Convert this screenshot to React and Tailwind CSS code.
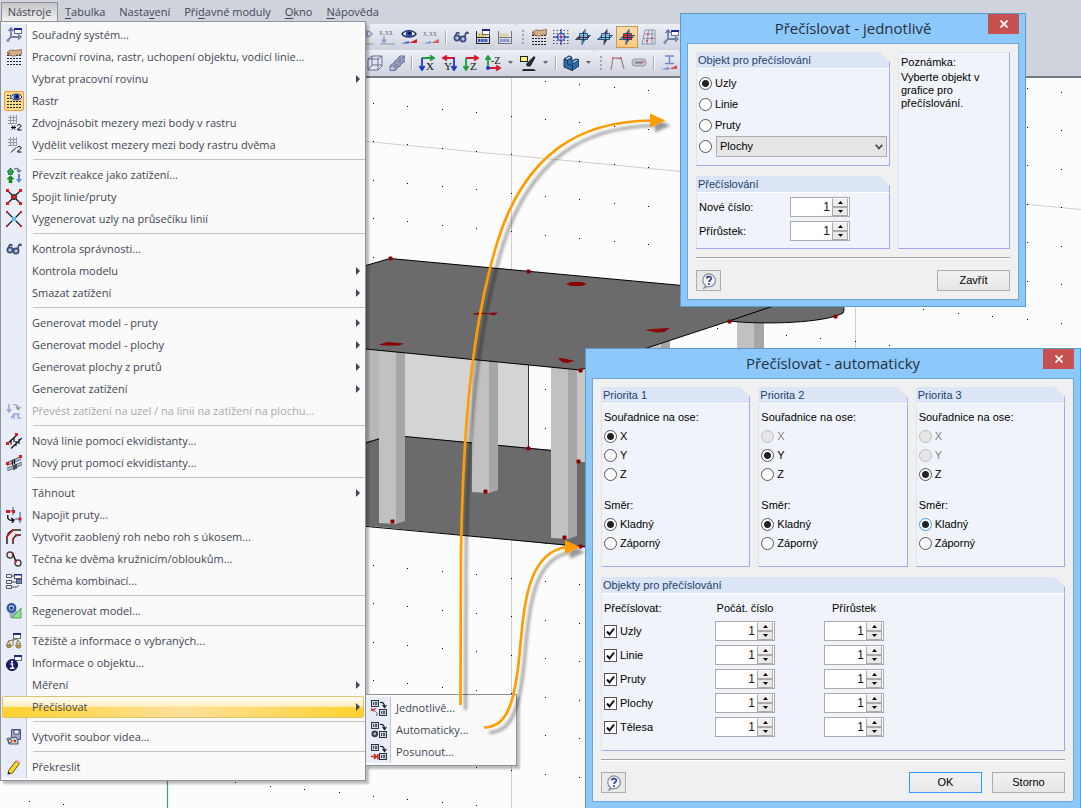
import React, { useState } from "react";

// small pieces that several icons share
const MiniWindow = ({ x = 8, y = 1 }) => (
  <g>
    <rect x={x + 0.5} y={y + 0.5} width="7" height="5" fill="#fff" stroke="#6b6f7a" />
    <rect x={x} y={y} width="8" height="2" fill="#1d2a8c" />
  </g>
);

const Dots = ({ y = 6, fill = "#222" }) => (
  <path
    d={`M1 ${y + 0.5}h14M1 ${y + 3.5}h14M1 ${y + 6.5}h14M1 ${y + 9.5}h14`}
    stroke={fill}
    strokeWidth="1"
    strokeDasharray="2 1"
    fill="none"
  />
);

const Hand = () => (
  <path
    d="M1 3.5C3 1 6 .5 9 1.500L15.500.5v5L11 6C9 7.500 6 7.500 4 6L1 5l3-.8z"
    fill="#d8ae86"
    stroke="#7a5a42"
    strokeWidth=".7"
  />
);

const NumBoxes = () => (
  <g fill="#cfe6f8" stroke="#1c2026" strokeWidth=".9">
    <rect x=".5" y=".5" width="7" height="6" />
    <path d="M2.500 2v3M4.200 2.200h1.500v2.500H4.200z" strokeWidth=".8" fill="none" />
    <rect x="8.500" y="9.500" width="7" height="6" />
    <path d="M10.500 11v3M12.200 11.200h1.500v2.500h-1.500z" strokeWidth=".8" fill="none" />
    <path d="M9 2.500c3-.5 4.500 1 4.500 4.500M11.500 5l2 2.500 2-2.500" strokeWidth="1.200" fill="none" />
  </g>
);

const Eye = () => (
  <g>
    <path d="M1 5C4 .5 12 .5 15 5 12 9 4 9 1 5z" fill="#e6ecfa" stroke="#222c44" strokeWidth="1.400" />
    <circle cx="8" cy="4.800" r="3.200" fill="#2448b8" />
    <circle cx="8.500" cy="4.300" r="1.200" fill="#000" />
  </g>
);

const Wedge = () => (
  <g>
    <path d="M0 14.500l8-2.500v2.500z" fill="#4a62d8" />
    <path d="M8 14l8-4v4z" fill="#d8201c" />
  </g>
);

// three crossing planes, one of them in red
const Planes = ({ flat = "#8ec9ee", side = "#8ec9ee", front = "#8ec9ee" }) => (
  <g stroke="#1f4c78" strokeWidth=".9">
    <path d="M7 5l3-4.500v10L7 15.500z" fill={side} />
    <path d="M.5 10.500L5 6.500h10.500L11 10.500z" fill={flat} />
    <path d="M4.500 4.500h8v6h-8z" fill={front} fillOpacity=".75" />
    <path d="M8.500 3v9M3 8.500h11" stroke="#16344f" fill="none" />
  </g>
);

const Goggles = () => (
  <g fill="none" stroke="#3c4a78" strokeWidth="1.700">
    <circle cx="4" cy="9" r="2.600" fill="#b9c6e6" />
    <circle cx="10" cy="10" r="2.600" fill="#b9c6e6" />
    <path d="M6.500 8.500l2-.5M3 6c0-3 3-3 3-1M12 8c0-5 3-6 3-3" />
  </g>
);

const Axes = ({ letter, flip, h = "#18a040", v = "#2038c8" }) => (
  <g>
    <path d={flip ? "M14 3H3M6 .5L2 3l4 2.500" : "M3 3h11M11 .5L15 3l-4 2.500"} stroke={h} strokeWidth="1.800" fill="none" />
    <path d={flip ? "M13 3v10M10.500 11l2.500 4 2.500-4" : "M3 3v10M.5 11L3 15l2.500-4"} stroke={v} strokeWidth="1.800" fill="none" />
    <text x={flip ? 3 : 7} y="15" fontSize="11" fontFamily="Liberation Serif, serif" fill="#111">
      {letter}
    </text>
  </g>
);

const Hash = () => (
  <path d="M3.500 1v9M6.500 1v9M9.500 1v9M1 3.500h9M1 6.500h9M1 9.500h9" transform="translate(1 -1)" stroke="#9b9b9b" fill="none" />
);

const Abacus = () => (
  <g>
    <path d="M1.500 2v13M14.500 2v13M1 8.500h14M1 14.500h14" stroke="#222" fill="none" />
    <path d="M3 6h8" stroke="#d8b838" strokeWidth="3" strokeDasharray="2.500 .7" />
    <path d="M3 11.500h10" stroke="#3450b8" strokeWidth="3" strokeDasharray="2.500 .7" />
  </g>
);

const icons = {
  coord: (
    <g>
      <path d="M5 2v8h8M5 10l-4 4" stroke="#7081ac" strokeWidth="1.800" fill="none" />
      <path d="M2.500 4L5 1l2.500 3M12 7.500l3 2.500-3 2.500" stroke="#5a6a94" strokeWidth="1.200" fill="none" />
      <circle cx="2" cy="13.500" r="1.500" fill="#7f90bc" />
      <MiniWindow x={8} y={1} />
    </g>
  ),
  handGrid: (
    <g>
      <Dots y={6} />
      <Hand />
    </g>
  ),
  eyeGrid: (
    <g>
      <path d="M1 2.500h4M1 5.500h4M1 8.500h14M1 11.500h14M1 14.500h14" stroke="#222" strokeDasharray="2 1" />
      <path d="M4.500 4C7 0 14 0 16 4c-2 4-9 4-11.500 0z" fill="#dfe7fa" stroke="#20304c" />
      <circle cx="10.500" cy="4" r="3" fill="#2448b8" />
      <circle cx="11" cy="3.500" r="1.200" fill="#000" />
    </g>
  ),
  mul2: (
    <g>
      <Hash />
      <path d="M5 12.500h5M6 10.500l3 4M9 10.500l-3 4" stroke="#000" fill="none" />
      <path d="M11.500 11c0-2 3.500-2 3.500 0 0 1.500-3.500 2.500-3.500 4H15.500" stroke="#000" fill="none" />
    </g>
  ),
  div2: (
    <g>
      <Hash />
      <path d="M5 15.500l5-5" stroke="#000" fill="none" />
      <path d="M11.500 11c0-2 3.500-2 3.500 0 0 1.500-3.500 2.500-3.500 4H15.500" stroke="#000" fill="none" />
    </g>
  ),
  reaction: (
    <g>
      <path d="M4.500 1L8 5H6.500v2.500h-4V5H1z" fill="#2fa84a" stroke="#165a28" strokeWidth=".7" />
      <path d="M4.500 8.500L8 12H6v4H3v-4H1z" fill="#119c14" stroke="#0b5a10" strokeWidth=".5" />
      <path d="M8 2.500c3-2 5-1 5 2M11 3l2 2 2-2" stroke="#6a7694" fill="none" strokeWidth="1.300" />
      <path d="M12 7h2v5h2l-3 4-3-4h2z" fill="#5a86e0" />
    </g>
  ),
  join: (
    <g>
      <path d="M2 2l12 12M14 2L2 14" stroke="#111" strokeWidth="1.200" />
      <circle cx="8" cy="8" r="2.500" fill="#e02828" stroke="#222" />
      <path d="M0 0h3v3H0zM13 0h3v3h-3zM0 13h3v3H0zM13 13h3v3h-3z" fill="#e01818" />
    </g>
  ),
  intersect: (
    <g>
      <path d="M1 1l14 14M15 1L1 15" stroke="#111" strokeWidth="1.100" />
      <rect x="6" y="6" width="4" height="4" fill="#58b8f4" />
      <path d="M0 0h2v2H0zM14 0h2v2h-2zM0 14h2v2H0zM14 14h2v2h-2z" fill="#e01818" />
    </g>
  ),
  goggles: <Goggles />,
  convert: (
    <g fill="none" stroke="#9aa6da" strokeWidth="1.500">
      <path d="M3 1v7M1 6l2 3 2-3M5 15l3-4h6M8 11v5M12 11v4l3 0" />
      <path d="M7 2c4-1 5 1 5 4M10 4l2 2.500L14.500 4" stroke="#8d9096" strokeWidth="1.200" />
    </g>
  ),
  offsetLine: (
    <g stroke="#111" fill="none" strokeWidth="1.200">
      <path d="M1 11L11 2M5 15.500L16 5M5 6.500v5M8 4v5M10 8v5M13 6v5" />
      <path d="M0 9h3v3H0zM9 0h3v3H9z" fill="#e01818" stroke="none" />
    </g>
  ),
  offsetBar: (
    <g stroke="#111" fill="none" strokeWidth=".8">
      <path d="M1 9l14-6M1 14.500l15-6" stroke="#9fb8d8" strokeWidth="2.500" />
      <path d="M1 7.500l14-6M1 10.500l14-6M1 13l15-6M1 16l15-6" stroke="#555" />
      <path d="M6.500 5v5M8.500 4v5M8 10v5M10 9v5" strokeWidth="1.200" />
      <path d="M0 7h3v3H0zM13 0h3v3h-3z" fill="#e01818" stroke="none" />
    </g>
  ),
  connect: (
    <g>
      <path d="M0 4h8M7 0v8M14 5v11M9 12h6" stroke="#7fa4d4" strokeWidth="2" />
      <path d="M0 3h4v3H0zM6 3h3v3H6zM12.500 10.500h3v3h-3z" fill="#d81818" />
      <path d="M2 8c-1 4 1 6 5 5M5 11l3 2-2 3" stroke="#111" fill="none" strokeWidth="1.400" />
    </g>
  ),
  fillet: (
    <g fill="none" stroke="#222" strokeWidth="1.500">
      <path d="M1 15V10C1 5 4 2 8 1h7M7 15v-5l3-4h5" />
      <path d="M6 0h2v2H6zM0 7h2v2H0zM9 5h2.500v2.500H9zM6 10h2v2H6z" fill="#e01818" stroke="none" />
      <path d="M1.500 7L7 1.500" stroke="#e01818" strokeWidth="1.200" />
    </g>
  ),
  tangent: (
    <g fill="none" stroke="#4a4040" strokeWidth="1.400">
      <circle cx="4" cy="4" r="3" />
      <circle cx="12" cy="12" r="3" />
      <path d="M7 3l3 8" stroke="#111" />
      <path d="M5.500 1.500h2v2h-2zM9 9.500h2v2H9z" fill="#e01818" stroke="none" />
    </g>
  ),
  scheme: (
    <g fill="#e9eef8" stroke="#555">
      <path d="M.5 1.500h5v3h-5zM.5 7.500h5v3h-5zM.5 12.500h5v3h-5z" />
      <path d="M6 3h4M6 14h5l2-2M6 9h4" fill="none" />
      <rect x="8.500" y="1.500" width="7" height="4" fill="#fff" />
      <rect x="10.500" y="6.500" width="5" height="4" fill="#5a86d8" />
      <path d="M8 1h8v1.500H8z" fill="#1d2a8c" stroke="none" />
    </g>
  ),
  regen: (
    <g>
      <path d="M2 5l4-2 9 9v3H4z" fill="#9fb0c8" />
      <path d="M6 15L15 5v10z" fill="#8fe08f" stroke="#3f9a4a" strokeWidth=".8" />
      <circle cx="5.500" cy="5" r="3.800" fill="none" stroke="#2a52a8" strokeWidth="2.200" />
      <circle cx="5.500" cy="5" r="1.400" fill="#17306a" />
    </g>
  ),
  scales: (
    <g>
      <path d="M7 6v7M2 8l10-2M2.500 8L.5 12h4zM12 7l-2 4h5z" stroke="#7a6a3a" fill="#efe6bd" strokeWidth=".9" />
      <path d="M.5 12.500h5l-1 2h-3zM9.500 12.500h5.500l-1 2.500h-3z" fill="#c9ab48" stroke="#6f5a1c" strokeWidth=".7" />
      <MiniWindow x={7} y={0} />
    </g>
  ),
  info: (
    <g>
      <MiniWindow x={8} y={0} />
      <circle cx="6" cy="10" r="5.500" fill="#181c74" stroke="#0c0e40" />
      <path d="M4.500 9h2v4M4 13.200h4.500" stroke="#fff" fill="none" strokeWidth="1.400" />
      <rect x="5" y="5.800" width="2" height="1.800" fill="#fff" />
    </g>
  ),
  video: (
    <g stroke="#3f4660" strokeWidth=".9">
      <path d="M5.500.5h9v10h-9z" fill="#9fa6d8" />
      <path d="M8 1h5v4H8z" fill="#f4f5ff" />
      <path d="M1 9.500l9-1.500 2 3v4H3z" fill="#c9ccd4" />
      <circle cx="4" cy="12" r="1.600" fill="#eee" />
      <path d="M6 11h2v2H6z" fill="#e0c020" stroke="none" />
      <path d="M8 11h2v2H8z" fill="#d02020" stroke="none" />
    </g>
  ),
  pencil: (
    <g>
      <path d="M2.500 11.500L10 2l3.500 2.500-7 9.500-4 1z" fill="#f7d425" stroke="#5a4a14" strokeWidth=".9" />
      <path d="M10 2l1.500-1.500 3 2L13.500 4.500z" fill="#f3b6c6" />
      <path d="M2 12.500l-.5 3 3-1z" fill="#222" />
    </g>
  ),
  renumPick: (
    <g>
      <NumBoxes />
      <path d="M0 8l2.500 3.500M0 10.500L5 8.500" stroke="#c82828" strokeWidth="1.200" fill="none" />
      <path d="M3 10l4 4-2 .5 1 1.500" stroke="#777" fill="#eee" />
    </g>
  ),
  renumAuto: (
    <g>
      <NumBoxes />
      <circle cx="3.800" cy="11.800" r="2.400" fill="#b9bcc8" stroke="#3a3f50" strokeWidth="2" />
    </g>
  ),
  renumShift: (
    <g>
      <NumBoxes />
      <path d="M0 12.500h5M3 10l2.500 2.500L3 15M7 10v5.500" stroke="#d81818" strokeWidth="1.500" fill="none" />
    </g>
  ),
  xxxDown: (
    <g opacity=".7">
      <text x="0" y="6" fontSize="8" fontFamily="Liberation Serif, serif" fill="#333">x.xx</text>
      <path d="M5 7v6M3 10.500L5 13.500l2-3" stroke="#5a86d8" strokeWidth="1.500" fill="none" />
      <path d="M1 15h15" stroke="#777" />
    </g>
  ),
  xxxWedge: (
    <g opacity=".65">
      <text x="0" y="7" fontSize="8" fontFamily="Liberation Serif, serif" fill="#333">x.xx</text>
      <Wedge />
    </g>
  ),
  eyeWedge: (
    <g>
      <Eye />
      <Wedge />
    </g>
  ),
  abacusWin: (
    <g>
      <Abacus />
      <MiniWindow x={7} y={0} />
    </g>
  ),
  abacus: (
    <g opacity=".55">
      <Abacus />
    </g>
  ),
  snap: (
    <g>
      <path d="M0 1.500h16M0 4.500h16M0 8.500h16M0 11.500h16M0 14.500h16" stroke="#555" strokeDasharray="1.500 2" />
      <path d="M8 0v16M0 8h16" stroke="#20309c" />
      <circle cx="8" cy="8" r="3.500" fill="#eef1f8" stroke="#2a48c8" strokeWidth="1.200" />
      <path d="M8 3v10M3 8h10" stroke="#2a48c8" />
      <rect x="7" y="7" width="2" height="2" fill="#e02020" />
    </g>
  ),
  planeXY: <Planes flat="#e02828" />,
  planeYZ: <Planes side="#e02828" />,
  planeXZ: <Planes front="#e80c0c" />,
  planeGrid: (
    <g stroke="#7a8ca8" fill="none" opacity=".85">
      <path d="M4 1h10v14H1zM3.500 5h10M2.500 9.500h11.500M7.500 1L6 15M11 1v14" />
      <path d="M6 4h2v2H6zM10 8h2v2h-2zM5 11h2v2H5z" fill="#d84848" stroke="none" />
    </g>
  ),
  fadedEye: (
    <g opacity=".4">
      <Eye />
      <path d="M0 15h16" stroke="#333" />
    </g>
  ),
  cube: (
    <g fill="#dfe5f3" stroke="#66708c">
      <path d="M1 4l4-3h10v10l-4 4H1z" />
      <path d="M1 4h10v11M11 4l4-3M5 1v9h10M5 10l-4 5" fill="none" />
    </g>
  ),
  cubes: (
    <g fill="#b9c4e0" stroke="#66708c">
      <path d="M9 3l2-2h5v5l-2 2H9z" />
      <path d="M5 7l2-2h5v5l-2 2H5z" />
      <path d="M1 11l2-2h5v5l-2 1.500H1z" />
      <path d="M9 3h5v5M5 7h5v5M1 11h5v4M14 3l2-2M10 7l2-2M6 11l2-2" fill="none" />
    </g>
  ),
  axisX: <Axes letter="X" h="#18a040" />,
  axisY: <Axes letter="Y" flip h="#d81830" />,
  axisZ: <Axes letter="Z" h="#d81830" v="#18a040" />,
  axisMinusZ: (
    <g>
      <path d="M3 13V2M.5 5L3 1l2.500 4" stroke="#18a040" strokeWidth="1.800" fill="none" />
      <path d="M3 13h11M11 10.500l4 2.500-4 2.500" stroke="#d81830" strokeWidth="1.800" fill="none" />
      <circle cx="3" cy="13" r="2" fill="#2038c8" />
      <text x="6" y="9" fontSize="10" fontFamily="Liberation Serif, serif" fill="#111">-Z</text>
    </g>
  ),
  render: (
    <g>
      <path d="M3 14h11l2 2H2zM6 9l8-8 1.500 1.500-5 9H7z" fill="#222a30" />
      <rect x=".5" y="1.500" width="7" height="5" fill="#fdf66a" stroke="#222" />
    </g>
  ),
  solid: (
    <g stroke="#12304c" strokeWidth=".9">
      <path d="M1 4l5-3 3 1.500V6l4-2 3 1v6l-7 4.500L1 12z" fill="#2f6ea6" />
      <path d="M1 4l5-3 3 1.500L4.500 5zM9 7l4-3 3 1-6.500 4z" fill="#a9d3f0" />
      <path d="M4.500 5v4l5 1.500v5" fill="none" />
    </g>
  ),
  frame: (
    <g fill="none" stroke="#8a6a72" strokeWidth="1.200" opacity=".8">
      <path d="M2 15L4 3h8l3 11M4 3l8 1" />
      <path d="M3 2h2v2H3zM11 2h2v2h-2z" fill="#d84848" stroke="none" />
    </g>
  ),
  tape: (
    <g opacity=".7">
      <rect x="1" y="4" width="14" height="7" rx="3" fill="#b8bcc8" stroke="#777" />
      <path d="M4 7.500h7" stroke="#555" strokeWidth="2" />
      <path d="M11 6h2v2h-2z" fill="#d84848" />
    </g>
  ),
  beam: (
    <g opacity=".7">
      <path d="M4 1h9M8.500 1v7M4 8.500h9" stroke="#4a62b8" strokeWidth="1.500" />
      <Wedge />
    </g>
  ),
};

const Icon = ({ name }) => (
  <svg viewBox="0 0 16 16" className="size-4 shrink-0" aria-hidden="true">
    {icons[name]}
  </svg>
);

const menuItems = [
  { label: "Souřadný systém...", icon: "coord" },
  { label: "Pracovní rovina, rastr, uchopení objektu, vodicí linie...", icon: "handGrid" },
  { label: "Vybrat pracovní rovinu", sub: true },
  { label: "Rastr", icon: "eyeGrid", active: true },
  { label: "Zdvojnásobit mezery mezi body v rastru", icon: "mul2" },
  { label: "Vydělit velikost mezery mezi body rastru dvěma", icon: "div2" },
  null,
  { label: "Převzít reakce jako zatížení...", icon: "reaction" },
  { label: "Spojit linie/pruty", icon: "join" },
  { label: "Vygenerovat uzly na průsečíku linií", icon: "intersect" },
  null,
  { label: "Kontrola správnosti...", icon: "goggles" },
  { label: "Kontrola modelu", sub: true },
  { label: "Smazat zatížení", sub: true },
  null,
  { label: "Generovat model - pruty", sub: true },
  { label: "Generovat model - plochy", sub: true },
  { label: "Generovat plochy z prutů", sub: true },
  { label: "Generovat zatížení", sub: true },
  { label: "Převést zatížení na uzel / na linii na zatížení na plochu...", icon: "convert", disabled: true },
  null,
  { label: "Nová linie pomocí ekvidistanty...", icon: "offsetLine" },
  { label: "Nový prut pomocí ekvidistanty...", icon: "offsetBar" },
  null,
  { label: "Táhnout", sub: true },
  { label: "Napojit pruty...", icon: "connect" },
  { label: "Vytvořit zaoblený roh nebo roh s úkosem...", icon: "fillet" },
  { label: "Tečna ke dvěma kružnicím/obloukům...", icon: "tangent" },
  { label: "Schéma kombinací...", icon: "scheme" },
  null,
  { label: "Regenerovat model...", icon: "regen" },
  null,
  { label: "Těžiště a informace o vybraných...", icon: "scales" },
  { label: "Informace o objektu...", icon: "info" },
  { label: "Měření", sub: true },
  { label: "Přečíslovat", sub: true, highlight: true },
  null,
  { label: "Vytvořit soubor videa...", icon: "video" },
  null,
  { label: "Překreslit", icon: "pencil" },
];

const subItems = [
  { label: "Jednotlivě...", icon: "renumPick" },
  { label: "Automaticky...", icon: "renumAuto" },
  { label: "Posunout...", icon: "renumShift" },
];

// [before, underlined letter, after]
const menuBar = [
  ["", "T", "abulka"],
  ["Nasta", "v", "ení"],
  ["Pří", "d", "avné moduly"],
  ["", "O", "kno"],
  ["", "N", "ápověda"],
];

function MenuBar() {
  return (
    <nav className="flex h-[22px] items-end pl-px">
      <button className="h-[20px] w-[57px] border border-b-0 border-[#8d9096] bg-linear-to-b from-[#c6c6c6] to-[#f4f4f4] text-center">
        Nástro<u>j</u>e
      </button>
      <div className="flex h-[20px] items-center gap-3.5 pl-[7px]">
        {menuBar.map(([a, b, c]) => (
          <button key={a + b + c}>
            {a}
            <u className="underline-offset-2">{b}</u>
            {c}
          </button>
        ))}
      </div>
    </nav>
  );
}

function Tool({ name, active }) {
  return (
    <button
      aria-label={name}
      className={
        active
          ? "flex size-[22px] shrink-0 items-center justify-center border border-[#c29b5c] bg-linear-to-b from-[#fbdcae] to-[#fdc978]"
          : "flex size-[22px] shrink-0 items-center justify-center"
      }
    >
      <Icon name={name} />
    </button>
  );
}

const Split = () => <div className="mx-[3px] h-3.5 w-0.5 shrink-0 border-l border-[#a6abb8] bg-white" />;

const Drop = () => (
  <svg viewBox="0 0 5 3" className="mx-1 h-[3px] w-[5px] shrink-0" aria-hidden="true">
    <path d="M0 0h5L2.500 3z" fill="#666" />
  </svg>
);

const Grip = () => (
  <svg viewBox="0 0 2 14" className="ml-[5px] mr-1 h-3.5 w-0.5 shrink-0" aria-hidden="true">
    <path d="M0 0h2v2H0zM0 4h2v2H0zM0 8h2v2H0zM0 12h2v2H0z" fill="#a0a5b0" />
  </svg>
);

const band = "flex h-[25px] items-center rounded-r bg-linear-to-b from-[#eceff5] to-[#d0d4df]";

function Toolbars() {
  return (
    <div className="flex flex-col gap-px overflow-hidden pb-px pt-0.5">
      <div className="flex pr-[300px]">
        <div className={band + " pl-[354px] pr-px"}>
          <Tool name="fadedEye" />
          <Tool name="xxxDown" />
          <Tool name="eyeWedge" />
          <Tool name="xxxWedge" />
          <Split />
          <Tool name="goggles" />
          <Tool name="abacusWin" />
          <Tool name="abacus" />
        </div>
        <div className={band}>
          <Grip />
          <Tool name="handGrid" />
          <Tool name="snap" />
          <Tool name="planeXY" />
          <Tool name="planeYZ" />
          <Tool name="planeXZ" active />
          <Tool name="planeGrid" />
          <Tool name="coord" />
        </div>
      </div>
      <div className="flex pr-[300px]">
        <div className={band + " pl-[364px]"}>
          <Tool name="cube" />
          <Tool name="cubes" />
          <Split />
          <Tool name="axisX" />
          <Tool name="axisY" />
          <Tool name="axisZ" />
          <Tool name="axisMinusZ" />
          <Drop />
          <Tool name="render" />
          <Drop />
          <Split />
          <Tool name="solid" />
          <Drop />
        </div>
        <div className={band}>
          <Grip />
          <Tool name="frame" />
          <Tool name="tape" />
          <Split />
          <Tool name="beam" />
        </div>
      </div>
    </div>
  );
}

// grid points of the work plane, the rows run slightly downwards
const gridDots = [];
for (let col = -10; col <= 21; col++) {
  for (let row = -2; row <= 20; row++) {
    gridDots.push([Math.round(373 + col * 34.4), Math.round(102.5 + col * 3.31 + row * 38.5)]);
  }
}

const nodes = [
  [390, 258], [528, 271], [580, 370], [392, 521], [485, 491], [528, 448],
  [564, 537], [580, 546], [578, 461], [729, 321], [835, 316],
];

function Scene() {
  return (
    <svg viewBox="0 78 1081 730" preserveAspectRatio="xMinYMin slice" className="block min-h-0 w-full flex-1 bg-[#fcfcfc]">
      <path d="M511.500 78v730M855.500 78v730M340 139L1081 209.500" stroke="#cfcfcf" fill="none" />
      <path d="M167.500 600v208" stroke="#3f9a92" strokeWidth="1.200" />
      {gridDots.map(([x, y]) => (
        <rect key={x + "-" + y} x={x} y={y} width="1" height="1" fill="#000" />
      ))}
      <path d="M340 340h188v115H340z" fill="#d4d4d4" />
      <path d="M340 340h39v115h-39z" fill="#b8b8b8" />
      <path d="M529 360h24v90h-24z" fill="#fcfcfc" />
      <path d="M528.500 360v88" stroke="#333" />
      <path d="M545 389h1v1h-1zM545 428h1v1h-1z" />
      <path d="M340 449L380 438 405 436.500 640 458 700 540 620 551 340 523z" fill="#6b6b6b" />
      <path d="M366 443L380 438.500M405 436.500L552 450.500M340 524L620 550" stroke="#000" fill="none" />
      <g>
        <path d="M577 366h10v96h-10z" fill="#c6c6c6" />
        <path d="M379 348h17v176l-17-1z" fill="#c1c1c1" />
        <path d="M396 348h9v173l-9 3z" fill="#a6a6a6" />
        <path d="M472 355h17v138l-17-1z" fill="#c1c1c1" />
        <path d="M489 355h9v135l-9 3z" fill="#a6a6a6" />
        <path d="M551 362h17v177l-17-1z" fill="#c1c1c1" />
        <path d="M568 362h9v174l-9 3z" fill="#a6a6a6" />
        <path d="M645 335h16v20h-16z" fill="#c1c1c1" />
        <path d="M661 332h9v20h-9z" fill="#a6a6a6" />
        <path d="M737 318h17v50h-17z" fill="#c1c1c1" />
        <path d="M754 318h10v50h-10z" fill="#a6a6a6" />
      </g>
      <path d="M340 273L390 258.500 720 289 800 290C835 294 848 304 843 313 825 323 765 325 729 321L580 370 340 346.500z" fill="#6b6b6b" stroke="#000" />
      <path d="M729 321L800 297" stroke="#000" />
      <g fill="#8b0000">
        <path d="M566 284l5-2h10l6 2-5 2h-11z" />
        <path d="M472 314l7-1.500 8 .5 11-.5-4 3-6-2-10 1.500z" />
        <path d="M379 344.500l9-2.500 16 1.500-5 2h-16z" />
        <path d="M558 358l6 .5 11 2.500-8 2-5-1z" />
        <path d="M645 330l8-1 17-1-6 4-8 .5z" />
        {nodes.map(([x, y]) => (
          <rect key={x + "-" + y} x={x - 1.5} y={y - 1.5} width="4" height="4" rx="1" />
        ))}
      </g>
    </svg>
  );
}

function MenuRow({ item, gutter }) {
  return (
    <button
      disabled={item.disabled}
      className={
        item.highlight
          ? "flex h-[22px] items-center border border-[#e2c16b] rounded-xs bg-[linear-gradient(180deg,#fffef8,#fdedb8_50%,transparent_50%),linear-gradient(90deg,#ffd22e,#fde09a_50%,#ffd22e)] mx-px text-left"
          : "flex h-[22px] items-center text-left disabled:text-[#a9a9a9]"
      }
    >
      <span className={gutter + (item.highlight ? " -ml-0.5" : "") + " flex h-full shrink-0 items-center justify-center"}>
        {item.icon && (
          <span
            className={
              item.active
                ? "flex size-5 items-center justify-center rounded-xs border border-[#f29a36] bg-[#fddc8a]"
                : "flex size-5 items-center justify-center"
            }
          >
            <Icon name={item.icon} />
          </span>
        )}
      </span>
      <span className="flex-1 whitespace-nowrap pl-[5px]">{item.label}</span>
      {item.sub && (
        <svg viewBox="0 0 4 8" className={item.highlight ? "mr-[3px] h-2 w-1" : "mr-[5px] h-2 w-1"} aria-hidden="true">
          <path d="M0 0l4 4-4 4z" fill="#3c4654" />
        </svg>
      )}
    </button>
  );
}

function ToolsMenu() {
  return (
    <div className="absolute left-0 top-[21px] w-[366px] border border-[#8f9299] bg-[#fafafa] py-0.5 shadow-[3px_3px_2px_rgba(0,0,0,0.25)]">
      <div className="flex flex-col bg-[linear-gradient(90deg,#e9edf7_25px,#c6c6c6_25px,#c6c6c6_26px,#fafafa_26px)]">
        {menuItems.map((item, i) =>
          item ? (
            <MenuRow key={item.label} item={item} gutter="w-[26px]" />
          ) : (
            <div key={i} className="flex h-2 pl-8 pt-[3px]">
              <hr className="h-px flex-1 border-0 bg-[#c3c3c3]" />
            </div>
          )
        )}
      </div>
    </div>
  );
}

function SubMenu() {
  return (
    <div className="absolute left-[365px] top-[694px] w-[152px] border border-[#8f9299] bg-[#fafafa] py-0.5 shadow-[3px_3px_2px_rgba(0,0,0,0.25)]">
      <div className="flex flex-col bg-[linear-gradient(90deg,#e9edf7_24px,#c6c6c6_24px,#c6c6c6_25px,#fafafa_25px)]">
        {subItems.map((item) => (
          <MenuRow key={item.label} item={item} gutter="w-[25px]" />
        ))}
      </div>
    </div>
  );
}

function Dialog({ title, place, children }) {
  return (
    <section className={place + " absolute border border-[#5e9bcb] bg-[#8dc8fb] px-1.5 pb-1.5 font-['Liberation_Sans',Arial,sans-serif] text-[11px] text-black"}>
      <div className="flex h-[29px]">
        <h2 className="flex-1 pl-[31px] text-center font-['Open_Sans',sans-serif] text-[15px] leading-7 text-[#26303c]">
          {title}
        </h2>
        <button aria-label="Zavřít" className="flex h-5 w-[31px] items-center justify-center bg-[#c75050]">
          <svg viewBox="0 0 8 8" className="size-2" aria-hidden="true">
            <path d="M.5.5l7 7M7.500.5l-7 7" stroke="#fff" strokeWidth="1.700" />
          </svg>
        </button>
      </div>
      <div className="border border-[#6fa6d3] bg-[#f0f0f0] p-2">{children}</div>
    </section>
  );
}

function Group({ title, className = "", children }) {
  return (
    <div className={className}>
      <h3 className="h-4 border-r border-[#a6a6ee] bg-[#dbe5f5] pl-0.5 leading-4 text-[#1c3f6e] [clip-path:polygon(0_0,calc(100%-10px)_0,100%_10px,100%_100%,0_100%)]">
        {title}
      </h3>
      <div className="border border-t-white border-b-[#a6a6ee] border-l-[#dbe5f5] border-r-[#a6a6ee] bg-[#f0f4fa]">
        {children}
      </div>
    </div>
  );
}

function RadioInput({ ring = "border-[#555]", ...props }) {
  return (
    <input
      type="radio"
      className={
        ring +
        " size-[13px] shrink-0 appearance-none rounded-full border bg-white checked:bg-[radial-gradient(circle,#222_3px,#fff_4px)] disabled:border-[#bcbcbc] disabled:bg-[#e6e6e6]"
      }
      {...props}
    />
  );
}

function Radio({ label, height = "h-[19px]", ...rest }) {
  return (
    <label className={height + " flex items-center gap-[3px] has-disabled:text-[#838383]"}>
      <RadioInput {...rest} />
      {label}
    </label>
  );
}

function Spinner({ id, label }) {
  const [value, setValue] = useState(1);
  return (
    <span className="flex h-5 w-[60px] border border-[#ababab] bg-white pr-px">
      <input
        id={id}
        aria-label={label}
        value={value}
        onChange={(e) => setValue(Number(e.target.value) || 0)}
        className="w-0 min-w-0 flex-1 pr-0.5 text-right text-[12px] text-[#201020] outline-none"
      />
      <span className="flex w-4 flex-col">
        <button
          aria-label="+"
          onClick={() => setValue(value + 1)}
          className="flex flex-1 items-center justify-center border border-[#ababab] border-t-white bg-[#efefef]"
        >
          <svg viewBox="0 0 5 3" className="h-[3px] w-[5px]"><path d="M0 3L2.500 0 5 3z" /></svg>
        </button>
        <button
          aria-label="-"
          onClick={() => setValue(value - 1)}
          className="flex flex-1 items-center justify-center border border-[#ababab] bg-[#e9e9e9]"
        >
          <svg viewBox="0 0 5 3" className="h-[3px] w-[5px]"><path d="M0 0h5L2.500 3z" /></svg>
        </button>
      </span>
    </span>
  );
}

const Rule = () => <div className="mt-2 h-0.5 border-t border-[#a0a0a0] bg-white" />;

function HelpButton() {
  return (
    <button aria-label="?" className="mr-auto flex h-[21px] w-[25px] items-center justify-center border border-[#adadad] bg-[#e9e9e9]">
      <svg viewBox="0 0 16 16" className="size-4" aria-hidden="true">
        <path d="M3 15l1.500-2.500A6.300 6.300 0 1 1 8 13.600H6z" fill="#f6f7fb" stroke="#8a8f9c" strokeWidth="1.300" />
        <path d="M5.800 5.500C6 2.800 10.600 2.900 10.300 5.600 10 7.300 8 7.200 8 9" fill="none" stroke="#3a4a94" strokeWidth="1.800" />
        <circle cx="7.900" cy="11" r="1.100" fill="#3a4a94" />
      </svg>
    </button>
  );
}

function PushButton({ children, primary }) {
  return (
    <button
      className={
        primary
          ? "h-[21px] w-[73px] border border-[#3399ff] bg-linear-to-b from-[#f2f2f2] to-[#e8e8e8]"
          : "h-[21px] w-[73px] border border-[#adadad] bg-linear-to-b from-[#f2f2f2] to-[#e6e6e6]"
      }
    >
      {children}
    </button>
  );
}

function SingleDialog() {
  const [kind, setKind] = useState("Uzly");
  return (
    <Dialog title="Přečíslovat - jednotlivě" place="left-[680px] top-[13px] w-[346px]">
      <div className="flex gap-2">
        <div className="flex w-[194px] flex-col gap-2.5">
          <Group title="Objekt pro přečíslování">
            <div className="px-0.5 pb-2 pt-1">
              {["Uzly", "Linie", "Pruty"].map((name) => (
                <Radio
                  key={name}
                  label={name}
                  height="h-[21px]"
                  name="kind"
                  checked={kind === name}
                  onChange={() => setKind(name)}
                />
              ))}
              <div className="flex h-[21px] items-center gap-1">
                <RadioInput name="kind" aria-label="Plochy" checked={kind === "other"} onChange={() => setKind("other")} />
                <div className="relative flex-1">
                  <select aria-label="Plochy" className="block h-[21px] w-full appearance-none border border-[#adadad] bg-[#e5e5e5] pl-[3px]">
                    <option>Plochy</option>
                    <option>Tělesa</option>
                  </select>
                  <svg viewBox="0 0 8 6" className="pointer-events-none absolute right-1 top-2 h-1.5 w-2" aria-hidden="true">
                    <path d="M.7.7L4 4.500 7.300.7" fill="none" stroke="#444" strokeWidth="1.700" />
                  </svg>
                </div>
              </div>
            </div>
          </Group>
          <Group title="Přečíslování">
            <div className="px-0.5 pb-[5px] pt-0.5">
              <div className="flex h-6 items-center">
                <label htmlFor="new-no" className="w-[91px]">Nové číslo:</label>
                <Spinner id="new-no" />
              </div>
              <div className="flex h-6 items-center">
                <label htmlFor="increment" className="w-[91px]">Přírůstek:</label>
                <Spinner id="increment" />
              </div>
            </div>
          </Group>
        </div>
        <div className="flex-1 border border-[#a6a6ee] border-l-[#dbe5f5] border-t-[#dbe5f5] bg-[#f0f4fa] px-0.5 py-[3px] leading-[13px]">
          <p className="pb-0.5">Poznámka:</p>
          <p>Vyberte objekt v grafice pro přečíslování.</p>
        </div>
      </div>
      <Rule />
      <div className="flex pt-[11px]">
        <HelpButton />
        <PushButton>Zavřít</PushButton>
      </div>
    </Dialog>
  );
}

const priorities = [
  { title: "Priorita 1", axis: "X", disabled: [] },
  { title: "Priorita 2", axis: "Y", disabled: ["X"] },
  { title: "Priorita 3", axis: "Z", disabled: ["X", "Y"], focused: true },
];

const objects = ["Uzly", "Linie", "Pruty", "Plochy", "Tělesa"];

function CheckBox({ label }) {
  return (
    <label className="flex items-center gap-[3px]">
      <span className="grid size-[13px]">
        <input
          type="checkbox"
          defaultChecked
          className="peer size-[13px] appearance-none border border-[#555] bg-white [grid-area:1/1]"
        />
        <svg viewBox="0 0 13 13" className="pointer-events-none invisible size-[13px] [grid-area:1/1] peer-checked:visible" aria-hidden="true">
          <path d="M3 6.500l2.500 3L10 3.500" fill="none" stroke="#111" strokeWidth="2" />
        </svg>
      </span>
      {label}
    </label>
  );
}

function AutoDialog() {
  return (
    <Dialog title="Přečíslovat - automaticky" place="left-[585px] top-[348px] w-[496px]">
      <div className="flex flex-col gap-2.5">
        <div className="flex gap-2">
          {priorities.map((p) => (
            <Group key={p.title} title={p.title} className="flex-1">
              <div className="px-0.5 pb-[13px] pt-1">
                <p className="leading-[19px]">Souřadnice na ose:</p>
                {["X", "Y", "Z"].map((axis) => (
                  <Radio
                    key={axis}
                    label={axis}
                    name={p.title + "-axis"}
                    defaultChecked={axis === p.axis}
                    disabled={p.disabled.includes(axis)}
                  />
                ))}
                <p className="pt-3 leading-[19px]">Směr:</p>
                <Radio
                  label="Kladný"
                  name={p.title + "-dir"}
                  defaultChecked
                  ring={p.focused ? "border-[#3399ff]" : "border-[#555]"}
                />
                <Radio label="Záporný" name={p.title + "-dir"} />
              </div>
            </Group>
          ))}
        </div>
        <Group title="Objekty pro přečíslování">
          <div className="px-0.5 pb-[11px] pt-[3px]">
            <table className="border-collapse">
              <thead>
                <tr className="h-[22px]">
                  <th className="w-[111px] p-0 text-left font-normal">Přečíslovat:</th>
                  <th className="w-[60px] p-0 font-normal">Počát. číslo</th>
                  <th className="w-[109px] p-0 pl-[49px] font-normal">Přírůstek</th>
                </tr>
              </thead>
              <tbody>
                {objects.map((name) => (
                  <tr key={name} className="h-6">
                    <td className="p-0"><CheckBox label={name} /></td>
                    <td className="p-0"><Spinner label={name + " - Počát. číslo"} /></td>
                    <td className="p-0 pl-[49px]"><Spinner label={name + " - Přírůstek"} /></td>
                  </tr>
                ))}
              </tbody>
            </table>
          </div>
        </Group>
      </div>
      <Rule />
      <div className="flex gap-2.5 pt-[11px]">
        <HelpButton />
        <PushButton primary>OK</PushButton>
        <PushButton>Storno</PushButton>
      </div>
    </Dialog>
  );
}

function Arrows() {
  return (
    <svg viewBox="0 0 1081 808" className="pointer-events-none absolute left-0 top-0 h-[808px] w-[1081px]" aria-hidden="true">
      <filter id="shade" x="-10%" y="-10%" width="130%" height="130%">
        <feDropShadow dx="5" dy="5" stdDeviation="1.6" floodColor="#000" floodOpacity=".4" />
      </filter>
      <g fill="none" stroke="#ff9c00" strokeWidth="2.700" filter="url(#shade)">
        <path d="M460.500 705L461 550C463 440 470 330 498 240 525 155 578 121 652 120.500" />
        <path d="M650 113.500v14l15.500-7z" fill="#ff9c00" stroke="none" />
        <path d="M484 727.500C505 727 513 708 518 668 524 620 522 553 567 547" />
        <path d="M565 540v14l15-7z" fill="#ff9c00" stroke="none" />
      </g>
    </svg>
  );
}

export default function App() {
  return (
    <div className="relative flex h-screen flex-col overflow-hidden bg-[#cfd3dc] font-['Open_Sans','Noto_Sans',sans-serif] text-[11px] text-[#3f4753]">
      <header className="border-b-2 border-[#76797d]">
        <MenuBar />
        <Toolbars />
      </header>
      <Scene />
      <ToolsMenu />
      <SubMenu />
      <SingleDialog />
      <AutoDialog />
      <Arrows />
    </div>
  );
}
